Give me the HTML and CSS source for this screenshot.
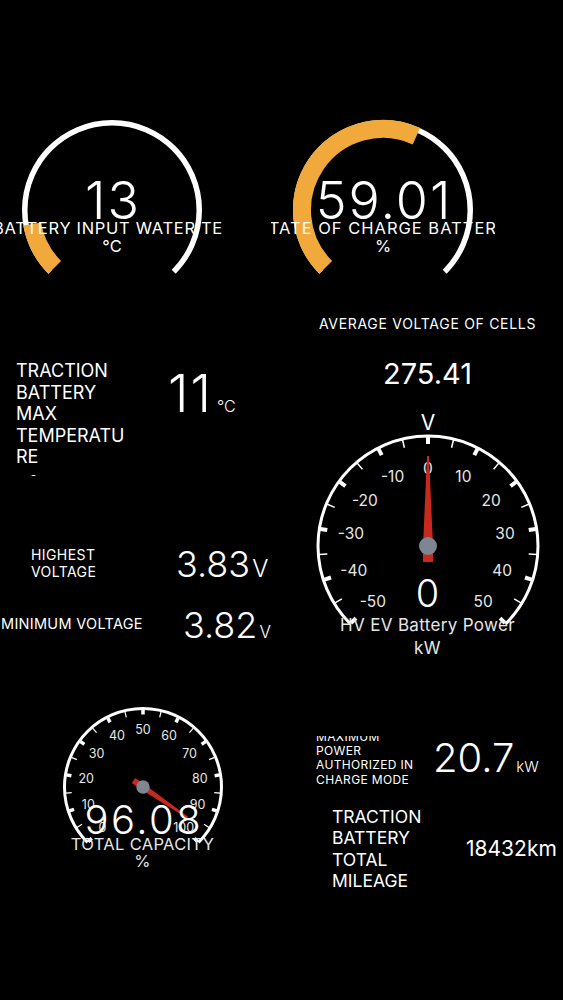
FILE: index.html
```html
<!DOCTYPE html>
<html lang="en">
<head>
    <meta charset="UTF-8">
    <meta name="viewport" content="width=device-width, initial-scale=1.0">
    <title>EV Battery Dashboard</title>
    <link rel="stylesheet" href="styles.css">
</head>
<body>
    <div class="dash">
        <section class="rings">
            <div class="ring">
                <svg class="ring-dial" viewBox="0 0 224 180" width="224" height="180">
                    <path class="ring-track" d="M50.31 161.69 A87.25 87.25 0 1 1 173.69 161.69"/>
                    <path class="ring-fill" d="M54.72 157.28 A81 81 0 0 1 32.21 113.93"/>
                </svg>
                <div class="ring-readout">
                    <div class="ring-value">13</div>
                    <div class="ring-label ring-label-start"><span>BATTERY INPUT WATER TEMPERATURE</span></div>
                    <div class="ring-unit">°C</div>
                </div>
            </div>
            <div class="ring">
                <svg class="ring-dial" viewBox="0 0 224 180" width="224" height="180">
                    <path class="ring-track" d="M50.31 161.69 A87.25 87.25 0 1 1 173.69 161.69"/>
                    <path class="ring-fill" d="M54.72 157.28 A81 81 0 0 1 145.38 26.2"/>
                </svg>
                <div class="ring-readout">
                    <div class="ring-value">59.01</div>
                    <div class="ring-label"><span>STATE OF CHARGE BATTERY</span></div>
                    <div class="ring-unit">%</div>
                </div>
            </div>
        </section>

        <section class="middle">
            <div class="readings">
                <div class="reading reading-max">
                    <div class="reading-name">
                        TRACTION BATTERY MAX TEMPERATURE
                        <div class="reading-note">-</div>
                    </div>
                    <div class="reading-value">11<span class="reading-unit">°C</span></div>
                </div>
                <div class="reading reading-high">
                    <div class="reading-name">HIGHEST VOLTAGE</div>
                    <div class="reading-value">3.83<span class="reading-unit">V</span></div>
                </div>
                <div class="reading reading-min">
                    <div class="reading-name">MINIMUM VOLTAGE</div>
                    <div class="reading-value">3.82<span class="reading-unit">V</span></div>
                </div>
            </div>

            <div class="cells">
                <div class="cells-name">AVERAGE VOLTAGE OF CELLS</div>
                <div class="cells-value">275.41</div>
                <div class="dial dial-power">
                    <svg id="power-dial" viewBox="0 0 240 250" width="240" height="250">
                        <text class="dial-top" x="120" y="25.5">V</text>
                    </svg>
                    <div class="dial-readout">
                        <div class="dial-value">0</div>
                        <div class="dial-label">HV EV Battery Power</div>
                        <div class="dial-label">kW</div>
                    </div>
                </div>
            </div>
        </section>

        <section class="lower">
            <div class="lower-left">
                <div class="dial dial-capacity">
                    <svg id="capacity-dial" viewBox="0 0 180 180" width="180" height="180"></svg>
                    <div class="dial-readout">
                        <div class="dial-value">96.08</div>
                        <div class="dial-label">TOTAL CAPACITY</div>
                        <div class="dial-label">%</div>
                    </div>
                </div>
            </div>
            <div class="limits">
                <div class="limit limit-charge">
                    <div class="limit-name"><span>MAXIMUM POWER AUTHORIZED IN CHARGE MODE</span></div>
                    <div class="limit-value">20.7<span class="limit-unit">kW</span></div>
                </div>
                <div class="limit limit-mileage">
                    <div class="limit-name">TRACTION BATTERY TOTAL MILEAGE</div>
                    <div class="limit-value">18432km</div>
                </div>
            </div>
        </section>
    </div>

    <script>
        const SVG_NS = 'http://www.w3.org/2000/svg';

        // angle in degrees, 0 = straight up, clockwise
        function point(cx, cy, r, deg) {
            const a = deg * Math.PI / 180;
            return [+(cx + r * Math.sin(a)).toFixed(2), +(cy - r * Math.cos(a)).toFixed(2)];
        }

        function add(parent, name, attrs, text) {
            const node = document.createElementNS(SVG_NS, name);
            Object.keys(attrs).forEach(key => node.setAttribute(key, attrs[key]));
            if (text !== undefined) node.textContent = text;
            parent.appendChild(node);
            return node;
        }

        function drawDial(svg, o) {
            const from = -135, sweep = 270;
            const angleOf = v => from + (v - o.min) / (o.max - o.min) * sweep;

            const a = point(o.cx, o.cy, o.r, from);
            const b = point(o.cx, o.cy, o.r, from + sweep);
            add(svg, 'path', { d: `M${a} A${o.r} ${o.r} 0 1 1 ${b}`, class: 'dial-arc', 'stroke-width': o.arcWidth });

            for (let v = o.min; v <= o.max; v += o.tick) {
                const deg = angleOf(v);
                const major = (v - o.min) % o.step === 0;
                const len = major ? o.majorLen : o.minorLen;
                const p1 = point(o.cx, o.cy, o.r - 1, deg);
                const p2 = point(o.cx, o.cy, o.r - 1 - len, deg);
                add(svg, 'line', {
                    x1: p1[0], y1: p1[1], x2: p2[0], y2: p2[1],
                    class: 'dial-tick',
                    'stroke-width': major ? o.majorWidth : o.minorWidth
                });
                if (major) {
                    const t = point(o.cx, o.cy, o.labelR, deg);
                    add(svg, 'text', { x: t[0], y: t[1], class: 'dial-num', 'font-size': o.fontSize }, v);
                }
            }

            const n = o.needle;
            const shape = [[-n.tip, -n.len], [n.tip, -n.len], [n.half, 0], [n.half, n.tail], [-n.half, n.tail], [-n.half, 0]];
            add(svg, 'polygon', {
                points: shape.map(p => (o.cx + p[0]) + ',' + (o.cy + p[1])).join(' '),
                class: 'dial-needle',
                transform: `rotate(${angleOf(o.value)} ${o.cx} ${o.cy})`
            });
            add(svg, 'circle', { cx: o.cx, cy: o.cy, r: o.pivot, class: 'dial-pivot' });
        }

        drawDial(document.getElementById('power-dial'), {
            cx: 120, cy: 142, r: 110, arcWidth: 3,
            min: -50, max: 50, tick: 5, step: 10,
            majorLen: 7, minorLen: 8, majorWidth: 4, minorWidth: 1.5,
            labelR: 78, fontSize: 15.5, value: 0,
            needle: { len: 90, tail: 16, half: 5, tip: 1 }, pivot: 9
        });

        drawDial(document.getElementById('capacity-dial'), {
            cx: 90, cy: 90, r: 78.5, arcWidth: 3,
            min: 0, max: 100, tick: 5, step: 10,
            majorLen: 5, minorLen: 6, majorWidth: 3.5, minorWidth: 1.2,
            labelR: 57.5, fontSize: 12.5, value: 96.08,
            needle: { len: 54, tail: 11.5, half: 3, tip: 0.8 }, pivot: 6.7
        });
    </script>
</body>
</html>
```

FILE: styles.css
```css
body {
    margin: 0;
    background: #000;
    color: #fff;
    font-family: Inter, "Liberation Sans", sans-serif;
}
.dash {
    width: 563px;
    height: 1000px;
    overflow: hidden;
}

/* ring gauges */
.rings {
    display: flex;
    gap: 47px;
    height: 180px;
    padding-top: 110px;
}
.ring {
    display: grid;
    width: 224px;
    height: 180px;
}
.ring > * {
    grid-area: 1 / 1;
}
.ring-track {
    fill: none;
    stroke: #fff;
    stroke-width: 5.5;
}
.ring-fill {
    fill: none;
    stroke: #f2a93b;
    stroke-width: 18;
}
.ring-readout {
    display: flex;
    flex-direction: column;
    align-items: center;
    padding-top: 64.5px;
}
.ring-value {
    font-size: 52px;
    line-height: 1;
    font-weight: 300;
    letter-spacing: 2px;
    margin-right: -2px;
}
.ring-label {
    width: 224px;
    display: flex;
    justify-content: center;
    overflow: hidden;
    white-space: nowrap;
    font-size: 16.5px;
    line-height: 16.5px;
    letter-spacing: 0.06em;
    margin-top: -7px;
}
.ring-label-start {
    justify-content: flex-start;
    letter-spacing: 0.042em;
}
.ring-label-start span {
    margin-left: -7px;
}
.ring-unit {
    font-size: 16.5px;
    line-height: 16.5px;
    margin-top: 2px;
}

/* middle block */
.middle {
    display: flex;
    height: 400px;
}
.readings {
    width: 292px;
}
.reading {
    display: flex;
    align-items: flex-start;
}
.reading-value {
    font-size: 36px;
    line-height: 1;
    font-weight: 300;
    white-space: nowrap;
}
.reading-unit {
    font-size: 24px;
    margin-left: 2px;
}
.reading-max {
    margin-top: 70px;
    padding-left: 16px;
}
.reading-max .reading-name {
    width: 113px;
    font-size: 18px;
    line-height: 21.5px;
    overflow-wrap: anywhere;
}
.reading-note {
    font-size: 11px;
    line-height: 14px;
    padding-left: 15px;
}
.reading-max .reading-value {
    font-size: 52px;
    letter-spacing: 2px;
    margin: 8px 0 0 39px;
}
.reading-max .reading-unit {
    font-size: 16px;
    letter-spacing: 0;
    margin-left: 4px;
}
.reading-high {
    margin-top: 64px;
    padding-left: 31px;
}
.reading-high .reading-name {
    width: 100px;
    font-size: 14px;
    line-height: 17.3px;
    letter-spacing: 0.03em;
}
.reading-high .reading-value {
    margin-left: 45px;
}
.reading-min {
    margin-top: 25px;
    padding-left: 1px;
}
.reading-min .reading-name {
    width: 140px;
    white-space: nowrap;
    font-size: 14.5px;
    line-height: 17.3px;
    letter-spacing: 0.02em;
    margin-top: 8.5px;
}
.reading-min .reading-value {
    margin-left: 42px;
}
.reading-min .reading-unit {
    font-size: 17px;
}

.cells {
    width: 271px;
    display: flex;
    flex-direction: column;
    align-items: center;
}
.cells-name {
    margin-top: 27px;
    font-size: 14px;
    line-height: 1;
    letter-spacing: 0.05em;
}
.cells-value {
    margin-top: 28px;
    font-size: 29px;
    line-height: 1;
}

/* needle dials */
.dial {
    display: grid;
}
.dial > * {
    grid-area: 1 / 1;
}
.dial-arc {
    fill: none;
    stroke: #fff;
}
.dial-tick {
    stroke: #fff;
}
.dial-num {
    fill: #e8e8e8;
    text-anchor: middle;
    dominant-baseline: central;
    font-family: Inter, "Liberation Sans", sans-serif;
}
.dial-top {
    fill: #fff;
    font-size: 21px;
    text-anchor: middle;
    font-family: Inter, "Liberation Sans", sans-serif;
}
.dial-needle {
    fill: #c8291f;
}
.dial-pivot {
    fill: #7e8692;
}
.dial-readout {
    display: flex;
    flex-direction: column;
    align-items: center;
}
.dial-value {
    line-height: 1;
    font-weight: 300;
}
.dial-label {
    color: #e6e6e6;
    white-space: nowrap;
}
.dial-power {
    margin-top: 16px;
}
.dial-power .dial-readout {
    padding-top: 170px;
}
.dial-power .dial-value {
    font-size: 38px;
    margin-bottom: 2px;
}
.dial-power .dial-label {
    font-size: 17px;
    line-height: 23px;
    letter-spacing: 0.02em;
}
.dial-capacity {
    margin: 7px 0 0 52.5px;
    width: 180px;
}
.dial-capacity .dial-readout {
    padding-top: 102.5px;
}
.dial-capacity .dial-value {
    font-size: 40px;
    letter-spacing: 2.5px;
    margin: 0 -2.5px -4px 0;
}
.dial-capacity .dial-label {
    font-size: 16.5px;
    line-height: 17px;
    letter-spacing: 0.02em;
}

/* lower block */
.lower {
    display: flex;
}
.lower-left {
    width: 285px;
}
.limit {
    display: flex;
}
.limit-charge {
    margin-top: 46px;
    padding-left: 31px;
    align-items: flex-start;
}
.limit-charge .limit-name {
    width: 104px;
    height: 51px;
    overflow: hidden;
    display: flex;
    flex-direction: column;
    justify-content: flex-end;
    font-size: 12px;
    line-height: 14.3px;
    letter-spacing: 0.03em;
}
.limit-charge .limit-value {
    margin: 1.5px 0 0 13px;
    font-size: 40px;
    line-height: 1;
    font-weight: 300;
}
.limit-unit {
    font-size: 15px;
    margin-left: 2px;
}
.limit-mileage {
    margin-top: 19px;
    padding-left: 47px;
    align-items: center;
}
.limit-mileage .limit-name {
    width: 100px;
    font-size: 17.5px;
    line-height: 21.3px;
}
.limit-mileage .limit-value {
    margin-left: 34px;
    font-size: 21px;
    line-height: 1;
}
```
